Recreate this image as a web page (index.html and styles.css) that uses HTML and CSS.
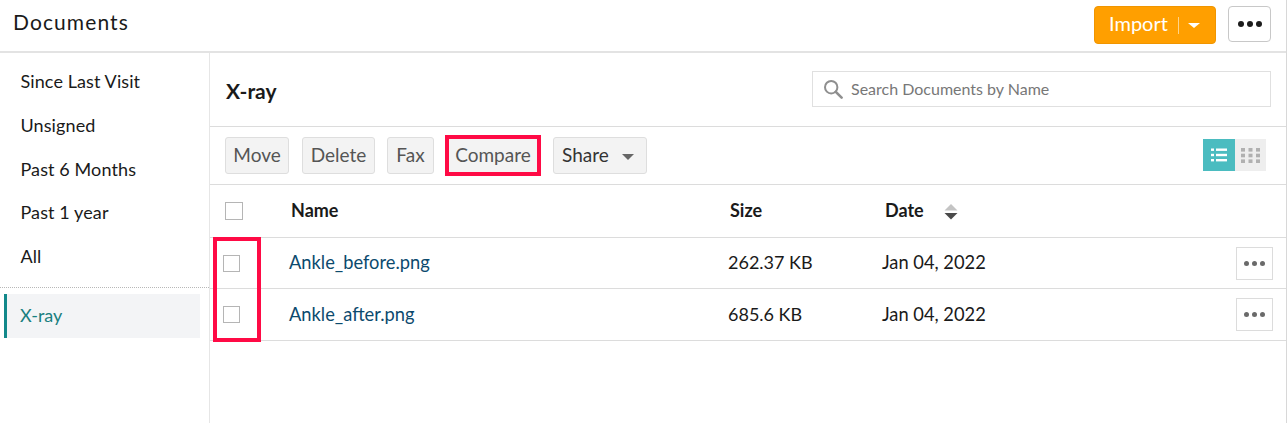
FILE: index.html
```html
<!DOCTYPE html>
<html>
<head>
  <link rel="stylesheet" href="styles.css">
</head>
<body>
  <div id="page">
    <div class="top-bar">
      <div class="page-title">Documents</div>
      <div class="import-btn">
        <span class="import-label">Import</span>
        <span class="import-sep"></span>
        <span class="import-caret"></span>
      </div>
      <div class="more-btn"><i></i><i></i><i></i></div>
    </div>

    <div class="content">
      <div class="sidebar">
        <div class="filters">
          <div class="filter">Since Last Visit</div>
          <div class="filter">Unsigned</div>
          <div class="filter">Past 6 Months</div>
          <div class="filter">Past 1 year</div>
          <div class="filter">All</div>
        </div>
        <div class="folder">X-ray</div>
      </div>

      <div class="main">
        <div class="main-head">
          <div class="folder-title">X-ray</div>
          <div class="search">
            <svg width="20" height="20" viewBox="0 0 20 20" fill="none" stroke="#8f8f8f" stroke-width="2">
              <circle cx="8.2" cy="8.2" r="6.2"></circle>
              <path d="M12.8 12.8 L18.6 18.6" stroke-width="2.6" stroke-linecap="round"></path>
            </svg>
            <span class="search-text">Search Documents by Name</span>
          </div>
        </div>

        <div class="toolbar">
          <div class="btn move">Move</div>
          <div class="btn delete">Delete</div>
          <div class="btn fax">Fax</div>
          <div class="btn compare">Compare<div class="mark-compare"></div></div>
          <div class="btn share">Share <span class="share-caret"></span></div>
          <div class="views">
            <div class="view view-list">
              <svg width="16" height="14" viewBox="0 0 16 14" fill="#fff">
                <rect x="0" y="0.5" width="3" height="2.4"></rect>
                <rect x="5" y="0.5" width="11" height="2.4"></rect>
                <rect x="0" y="5.8" width="3" height="2.4"></rect>
                <rect x="5" y="5.8" width="11" height="2.4"></rect>
                <rect x="0" y="11" width="3" height="2.4"></rect>
                <rect x="5" y="11" width="11" height="2.4"></rect>
              </svg>
            </div>
            <div class="view view-grid">
              <svg width="20" height="15" viewBox="0 0 20 15" fill="#b0b0b0">
                <rect x="0" y="0" width="4" height="3.6"></rect>
                <rect x="7.5" y="0" width="4" height="3.6"></rect>
                <rect x="15" y="0" width="4" height="3.6"></rect>
                <rect x="0" y="5.7" width="4" height="3.6"></rect>
                <rect x="7.5" y="5.7" width="4" height="3.6"></rect>
                <rect x="15" y="5.7" width="4" height="3.6"></rect>
                <rect x="0" y="11.4" width="4" height="3.6"></rect>
                <rect x="7.5" y="11.4" width="4" height="3.6"></rect>
                <rect x="15" y="11.4" width="4" height="3.6"></rect>
              </svg>
            </div>
          </div>
        </div>

        <div class="doc-table">
          <div class="table-head">
            <div class="check check-head"></div>
            <div class="col-name">Name</div>
            <div class="col-size">Size</div>
            <div class="col-date">
              Date
              <svg class="sort-icon" width="14" height="16" viewBox="0 0 14 16">
                <path d="M7 0 L13.5 6.5 L0.5 6.5 Z" fill="#c4c4c4"></path>
                <path d="M0.5 9 L13.5 9 L7 15.5 Z" fill="#4a4a4a"></path>
              </svg>
            </div>
          </div>
          <div class="row">
            <div class="check"></div>
            <div class="doc-name">Ankle_before.png</div>
            <div class="doc-size">262.37 KB</div>
            <div class="doc-date">Jan 04, 2022</div>
            <div class="row-more"><i></i><i></i><i></i></div>
          </div>
          <div class="row row-last">
            <div class="check"></div>
            <div class="doc-name">Ankle_after.png</div>
            <div class="doc-size">685.6 KB</div>
            <div class="doc-date">Jan 04, 2022</div>
            <div class="row-more"><i></i><i></i><i></i></div>
          </div>
          <div class="mark-checks"></div>
        </div>
      </div>
    </div>
  </div>
</body>
</html>
```

FILE: styles.css
```css
html, body {
  margin: 0;
  height: 100%;
  overflow: hidden;
}
body {
  font-family: Lato, "Open Sans", sans-serif;
  background-color: #ffffff;
  color: #1a1a1a;
}
#page {
  width: 1287px;
  height: 423px;
  border-right: 1px solid #d8d8d8;
  box-sizing: border-box;
}

/* top bar */
.top-bar {
  height: 53px;
  box-sizing: border-box;
  border-bottom: 2px solid #e3e3e3;
  display: flex;
  align-items: flex-start;
  padding: 6px 15px 0 13px;
}
.page-title {
  font-size: 21px;
  line-height: 32px;
  letter-spacing: 1.1px;
  margin-right: auto;
}
.import-btn {
  width: 122px;
  height: 38px;
  box-sizing: border-box;
  background-color: #ff9f00;
  border: 1px solid #f09500;
  border-radius: 4px;
  color: #ffffff;
  font-size: 20px;
  display: flex;
  align-items: center;
  padding-left: 14px;
}
.import-label {
  margin-bottom: 4px;
}
.import-sep {
  width: 1px;
  height: 17px;
  background-color: #ffd48a;
  margin-left: 10px;
  margin-right: 9px;
}
.import-caret {
  border-left: 6.5px solid transparent;
  border-right: 6.5px solid transparent;
  border-top: 5px solid #ffffff;
}
.more-btn {
  width: 43px;
  height: 36px;
  box-sizing: border-box;
  border: 1px solid #c8c8c8;
  border-radius: 4px;
  margin-left: 12px;
  display: flex;
  align-items: center;
  justify-content: center;
  gap: 3px;
}
.more-btn i {
  width: 6px;
  height: 6px;
  border-radius: 50%;
  background-color: #1c1c1c;
}

.content {
  display: flex;
  height: 370px;
}

/* left filters */
.sidebar {
  width: 210px;
  box-sizing: border-box;
  border-right: 1px solid #e6e6e6;
}
.filters {
  height: 235px;
  box-sizing: border-box;
  padding-top: 7px;
  border-bottom: 1px dotted #b8b8b8;
}
.filter {
  height: 43.75px;
  line-height: 43.75px;
  font-size: 18px;
  letter-spacing: 0.1px;
  padding-left: 20.5px;
}
.folder {
  width: 196px;
  height: 44px;
  line-height: 42px;
  box-sizing: border-box;
  margin: 6px 0 0 4px;
  border-left: 3px solid #12888a;
  background-color: #f3f4f6;
  color: #1a7f80;
  font-size: 18px;
  padding-left: 13px;
}

.main {
  flex: 1;
}
.main-head {
  height: 74px;
  box-sizing: border-box;
  border-bottom: 1px solid #dcdcdc;
  display: flex;
  align-items: flex-start;
  justify-content: space-between;
  padding: 18px 15px 0 16px;
}
.folder-title {
  font-size: 21px;
  font-weight: bold;
  line-height: 40px;
}
.search {
  width: 459px;
  height: 36px;
  box-sizing: border-box;
  border: 1px solid #e0e0e0;
  display: flex;
  align-items: center;
  gap: 8px;
  padding-left: 10px;
  color: #777777;
  font-size: 16px;
}
.search-text {
  margin-bottom: 2px;
}

/* action buttons */
.toolbar {
  height: 58px;
  box-sizing: border-box;
  border-bottom: 1px solid #dcdcdc;
  display: flex;
  align-items: flex-start;
  padding: 10px 20px 0 15px;
}
.btn {
  position: relative;
  height: 37px;
  line-height: 33px;
  box-sizing: border-box;
  border: 1px solid #dedede;
  border-radius: 3px;
  background-color: #f3f3f3;
  color: #555555;
  font-size: 19px;
  text-align: center;
}
.move { width: 64px; margin-right: 13px; }
.delete { width: 73px; margin-right: 12px; }
.fax { width: 47px; margin-right: 11px; }
.compare { width: 96px; margin-right: 12px; }
.share {
  width: 94px;
  color: #333333;
  text-align: left;
  padding-left: 8px;
}
.share-caret {
  display: inline-block;
  margin-left: 8px;
  vertical-align: middle;
  border-left: 6.5px solid transparent;
  border-right: 6.5px solid transparent;
  border-top: 6px solid #666666;
}
.mark-compare {
  position: absolute;
  left: -1px;
  top: -3px;
  width: 96px;
  height: 41px;
  box-sizing: border-box;
  border: 4px solid #ff0a45;
}
.views {
  display: flex;
  margin-left: auto;
  margin-top: 2px;
}
.view {
  height: 32px;
  display: flex;
  align-items: center;
  justify-content: center;
}
.view-list {
  width: 32px;
  background-color: #4bbcc0;
}
.view-grid {
  width: 31px;
  background-color: #eeeeee;
}

/* documents table */
.doc-table {
  position: relative;
}
.table-head, .row {
  display: grid;
  align-items: center;
  padding-left: 15px;
  box-sizing: border-box;
  border-bottom: 1px solid #dcdcdc;
}
.table-head {
  height: 53px;
  grid-template-columns: 66px 439px 155px 1fr;
  font-size: 18px;
  font-weight: bold;
}
.col-name, .col-size, .col-date {
  margin-bottom: 2px;
}
.row {
  height: 51px;
  grid-template-columns: 64px 439px 154px 1fr 37px;
  padding-right: 13px;
  font-size: 18.3px;
}
.row-last {
  height: 52px;
}
.doc-name, .doc-size, .doc-date {
  margin-bottom: 2px;
}
.doc-size {
  font-size: 18px;
}
.check {
  width: 17px;
  height: 17px;
  box-sizing: border-box;
  border: 1px solid #b5b5b5;
  margin-left: -2px;
}
.check-head {
  width: 18px;
  height: 18px;
  margin-left: 0;
}
.col-date {
  display: flex;
  align-items: center;
  gap: 20px;
}
.sort-icon {
  margin-top: 4px;
}
.doc-name {
  color: #0c4a6e;
}
.row-more {
  width: 37px;
  height: 33px;
  box-sizing: border-box;
  border: 1px solid #dcdcdc;
  display: flex;
  align-items: center;
  justify-content: center;
  gap: 3px;
}
.row-more i {
  width: 5px;
  height: 5px;
  border-radius: 50%;
  background-color: #6a6a6a;
}
.mark-checks {
  position: absolute;
  left: 3px;
  top: 52px;
  width: 48px;
  height: 105px;
  box-sizing: border-box;
  border: 4px solid #ff0a45;
}
```
